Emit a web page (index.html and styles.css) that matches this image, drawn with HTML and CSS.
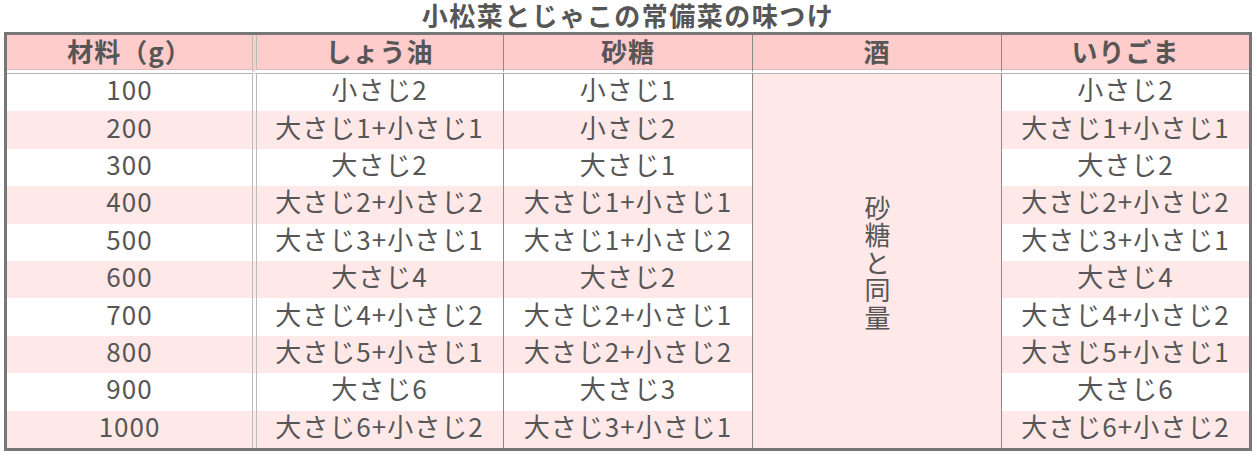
FILE: index.html
```html
<!DOCTYPE html>
<html lang="ja">
<head>
<meta charset="utf-8">
<title>小松菜とじゃこの常備菜の味つけ</title>
<link rel="stylesheet" href="styles.css">
</head>
<body>
<h1 class="title">小松菜とじゃこの常備菜の味つけ</h1>
<table class="recipe">
  <colgroup>
    <col class="c1"><col class="c2"><col class="c3"><col class="c4"><col class="c5">
  </colgroup>
  <thead>
    <tr><th>材料（g）</th><th>しょう油</th><th>砂糖</th><th>酒</th><th>いりごま</th></tr>
  </thead>
  <tbody>
    <tr><td>100</td><td>小さじ2</td><td>小さじ1</td><td rowspan="10" class="merged"><span class="vert">砂糖と同量</span></td><td>小さじ2</td></tr>
    <tr><td>200</td><td>大さじ1+小さじ1</td><td>小さじ2</td><td>大さじ1+小さじ1</td></tr>
    <tr><td>300</td><td>大さじ2</td><td>大さじ1</td><td>大さじ2</td></tr>
    <tr><td>400</td><td>大さじ2+小さじ2</td><td>大さじ1+小さじ1</td><td>大さじ2+小さじ2</td></tr>
    <tr><td>500</td><td>大さじ3+小さじ1</td><td>大さじ1+小さじ2</td><td>大さじ3+小さじ1</td></tr>
    <tr><td>600</td><td>大さじ4</td><td>大さじ2</td><td>大さじ4</td></tr>
    <tr><td>700</td><td>大さじ4+小さじ2</td><td>大さじ2+小さじ1</td><td>大さじ4+小さじ2</td></tr>
    <tr><td>800</td><td>大さじ5+小さじ1</td><td>大さじ2+小さじ2</td><td>大さじ5+小さじ1</td></tr>
    <tr><td>900</td><td>大さじ6</td><td>大さじ3</td><td>大さじ6</td></tr>
    <tr><td>1000</td><td>大さじ6+小さじ2</td><td>大さじ3+小さじ1</td><td>大さじ6+小さじ2</td></tr>
  </tbody>
</table>
</body>
</html>
```

FILE: styles.css
```css
html, body {
  margin: 0;
  padding: 0;
  background: #ffffff;
}

body {
  font-family: "Noto Sans CJK JP", sans-serif;
  color: #565656;
}

.title {
  margin: 0 0 0 4px;
  width: 1248px;
  height: 32px;
  line-height: 30px;
  font-size: 26px;
  font-weight: bold;
  letter-spacing: 1.5px;
  text-align: center;
  overflow: visible;
}

.recipe {
  margin-left: 4px;
  width: 1248px;
  table-layout: fixed;
  border: 3px solid #777777;
  border-collapse: separate;
  border-spacing: 0;
  font-size: 26px;
  letter-spacing: 1px;
}

.c1 { width: 246px; }
.c2 { width: 251px; }
.c3 { width: 249px; }
.c4 { width: 249px; }
.c5 { width: 247px; }

.recipe th,
.recipe td {
  padding: 0 0 7px 0;
  text-align: center;
  vertical-align: middle;
  white-space: nowrap;
  border-right: 1px solid #888888;
  line-height: 28px;
}

.recipe th:first-child,
.recipe td:first-child {
  border-right-color: #bbbbbb;
}

.recipe th:last-child,
.recipe td:last-child {
  border-right: none;
}

.recipe thead tr {
  height: 38px;
}

.recipe th {
  padding-bottom: 3px;
  background: #ffcccc;
  font-weight: bold;
  border-bottom: 3px solid #ffffff;
  box-shadow: inset 0 -1px 0 #d6bcbc;
}

.recipe th:nth-child(2) {
  border-left: 3px solid transparent;
  box-shadow: inset 1px 0 0 #bbbbbb, inset 0 -1px 0 #d6bcbc;
}

.recipe td:nth-child(2) {
  border-left: 3px solid transparent;
  box-shadow: inset 1px 0 0 #bbbbbb;
}

.recipe tbody tr {
  height: 37.4px;
}

.recipe tbody tr:first-child {
  height: 38.4px;
}

.recipe tbody tr:first-child td {
  border-top: 1px solid #b5b5b5;
}

.recipe tbody tr:nth-child(even) td {
  background: #ffe8e8;
}

.recipe td.merged {
  padding: 9px 0 0 0;
  background: #ffe8e8;
}

.vert {
  display: inline-block;
  writing-mode: vertical-rl;
  text-orientation: upright;
  letter-spacing: 1.5px;
  line-height: 30px;
}
```
